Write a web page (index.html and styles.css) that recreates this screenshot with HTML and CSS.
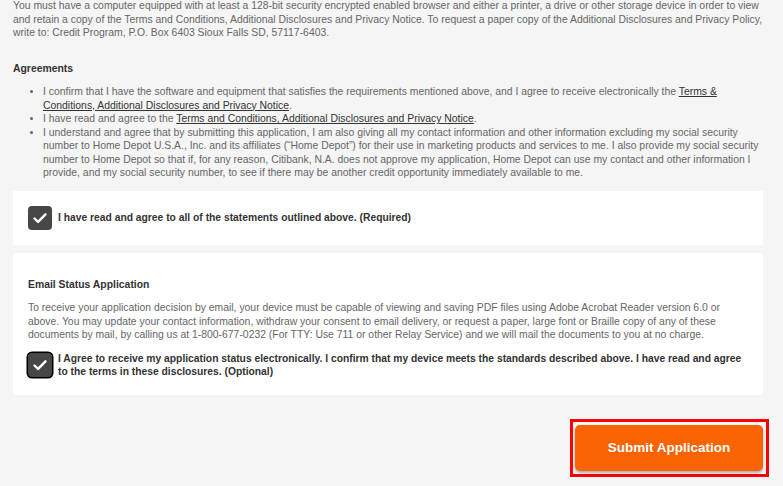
FILE: index.html
```html
<!DOCTYPE html>
<html lang="en">
<head>
<meta charset="utf-8">
<title>Submit Application</title>
<link rel="stylesheet" href="styles.css">
</head>
<body>
<main class="page">
  <p class="intro">You must have a computer equipped with at least a 128-bit security encrypted enabled browser and either a printer, a drive or other storage device in order to view and retain a copy of the Terms and Conditions, Additional Disclosures and Privacy Notice. To request a paper copy of the Additional Disclosures and Privacy Policy, write to: Credit Program, P.O. Box 6403 Sioux Falls SD, 57117-6403.</p>

  <h3 class="heading">Agreements</h3>
  <ul class="agree-list">
    <li>I confirm that I have the software and equipment that satisfies the requirements mentioned above, and I agree to receive electronically the <a href="#">Terms &amp; Conditions, Additional Disclosures and Privacy Notice</a>.</li>
    <li>I have read and agree to the <a href="#">Terms and Conditions, Additional Disclosures and Privacy Notice</a>.</li>
    <li>I understand and agree that by submitting this application, I am also giving all my contact information and other information excluding my social security number to Home Depot U.S.A., Inc. and its affiliates (“Home Depot”) for their use in marketing products and services to me. I also provide my social security number to Home Depot so that if, for any reason, Citibank, N.A. does not approve my application, Home Depot can use my contact and other information I provide, and my social security number, to see if there may be another credit opportunity immediately available to me.</li>
  </ul>

  <section class="card card-agree">
    <label class="check-row">
      <span class="checkbox">
        <svg viewBox="0 0 24 24" width="24" height="24"><path d="M6.5 12.5l3.6 3.4 7.4-7.6" fill="none" stroke="#fff" stroke-width="2.4" stroke-linecap="round" stroke-linejoin="round"/></svg>
      </span>
      <span class="check-text">I have read and agree to all of the statements outlined above. (Required)</span>
    </label>
  </section>

  <section class="card card-email">
    <h3 class="heading">Email Status Application</h3>
    <p class="email-text">To receive your application decision by email, your device must be capable of viewing and saving PDF files using Adobe Acrobat Reader version 6.0 or above. You may update your contact information, withdraw your consent to email delivery, or request a paper, large font or Braille copy of any of these documents by mail, by calling us at 1-800-677-0232 (For TTY: Use 711 or other Relay Service) and we will mail the documents to you at no charge.</p>
    <label class="check-row">
      <span class="checkbox checkbox-focus">
        <svg viewBox="0 0 24 24" width="24" height="24"><path d="M6.5 12.5l3.6 3.4 7.4-7.6" fill="none" stroke="#fff" stroke-width="2.4" stroke-linecap="round" stroke-linejoin="round"/></svg>
      </span>
      <span class="check-text">I Agree to receive my application status electronically. I confirm that my device meets the standards described above. I have read and agree to the terms in these disclosures. (Optional)</span>
    </label>
  </section>

  <div class="actions">
    <div class="submit-frame">
      <button class="submit" type="button">Submit Application</button>
    </div>
  </div>
</main>
</body>
</html>
```

FILE: styles.css
```css
html, body {
  margin: 0;
  padding: 0;
  background: #f5f5f5;
}

body {
  font-family: "Liberation Sans", Arial, sans-serif;
  font-size: 10.4px;
  line-height: 13.5px;
  color: #666;
}

.page {
  width: 750px;
  padding-left: 13px;
}

.intro {
  margin: -1px 0 0 0;
}

.heading {
  margin: 0;
  font-size: 10.4px;
  font-weight: bold;
  color: #333;
}

.intro + .heading {
  margin-top: 22px;
}

.agree-list {
  margin: 10px 0 0 0;
  padding-left: 30px;
}

.agree-list li {
  margin: 0;
}

.agree-list a {
  color: #333;
  text-decoration: underline;
}

.card {
  background: #fff;
}

.card-agree {
  margin-top: 11px;
  padding: 15px;
  height: 24px;
}

.card-email {
  margin-top: 8px;
  padding: 25px 15px 16px 15px;
}

.check-row {
  display: flex;
  align-items: center;
  gap: 6px;
}

.checkbox {
  flex: 0 0 24px;
  width: 24px;
  height: 24px;
  border-radius: 4px;
  background: #474747;
  display: flex;
  align-items: center;
  justify-content: center;
}

.checkbox-focus {
  box-shadow: 0 0 0 1.5px #000;
}

.check-text {
  font-weight: bold;
  color: #333;
  font-size: 10.3px;
}

.email-text {
  margin: 10px 0 10px 0;
}

.actions {
  display: flex;
  justify-content: flex-end;
  margin-top: 24px;
  margin-right: -6px;
}

.submit-frame {
  border: 3px solid #f00;
  padding: 3px 3px 3px 2px;
}

.submit {
  display: block;
  width: 188px;
  height: 46px;
  border: none;
  border-radius: 5px;
  background: #f96302;
  color: #fff;
  font-family: "Liberation Sans", Arial, sans-serif;
  font-weight: bold;
  font-size: 13.5px;
  box-shadow: 0 2px 3px rgba(0, 0, 0, 0.3);
  cursor: pointer;
}
```
